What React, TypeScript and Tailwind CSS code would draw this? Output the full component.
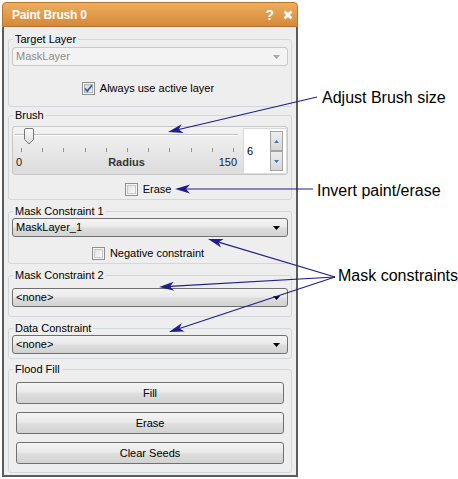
import type { ReactNode } from "react";

// Win7-ish control faces
const faceBg = "bg-[linear-gradient(#f4f4f4,#eaeaea_45%,#dddddd_55%,#d2d2d2)]";

const Group = ({ title, className, children }: { title: string; className: string; children: ReactNode }) => {
  return (
    <fieldset className={`rounded-[3px] border border-[#d0d8dd] px-[3px] ${className}`}>
      <legend className="ml-[1px] px-[2px] text-[11px] leading-[14px] text-black">{title}</legend>
      {children}
    </fieldset>
  );
};

const Combo = ({ text, disabled, className }: { text: string; disabled?: boolean; className?: string }) => {
  return (
    <div
      className={
        disabled
          ? `flex h-[19px] items-center justify-between rounded-[3px] border border-[#c8c8c8] bg-[#f3f3f3] pl-[3px] pr-[7px] text-[11px] text-[#8c8c8c] ${className ?? ""}`
          : `flex h-[19px] items-center justify-between rounded-[3px] border border-[#707070] ${faceBg} pl-[3px] pr-[7px] text-[11px] text-black ${className ?? ""}`
      }
    >
      <span>{text}</span>
      <svg width="7" height="4" viewBox="0 0 7 4">
        <polygon points="0,0 7,0 3.5,4" fill={disabled ? "#a6a6a6" : "#000000"} />
      </svg>
    </div>
  );
};

const CheckBox = ({ checked }: { checked?: boolean }) => {
  return (
    <svg width="13" height="13" viewBox="0 0 13 13">
      <defs>
        <linearGradient id={checked ? "cbOn" : "cbOff"} x1="0" y1="0" x2="1" y2="1">
          <stop offset="0" stopColor={checked ? "#d2d4d8" : "#e0e0e0"} />
          <stop offset="1" stopColor={checked ? "#f2f3f5" : "#fbfbfb"} />
        </linearGradient>
      </defs>
      <rect x="0.5" y="0.5" width="12" height="12" fill="#f4f4f4" stroke="#8e8f8f" />
      <rect x="2.5" y="2.5" width="8" height="8" fill={`url(#${checked ? "cbOn" : "cbOff"})`} stroke={checked ? "#b3b5ba" : "#c9c9c9"} />
      {checked && <path d="M3 6.5 L5.3 9 L10 3.2" fill="none" stroke="#3c5aa6" strokeWidth="1.8" />}
    </svg>
  );
};

const CheckRow = ({ label, checked, className }: { label: string; checked?: boolean; className: string }) => {
  return (
    <div className={`flex h-[14px] items-center justify-center gap-[5px] pr-[4px] text-[11px] text-black ${className}`}>
      <CheckBox checked={checked} />
      <span>{label}</span>
    </div>
  );
};

const Button = ({ label, className }: { label: string; className: string }) => {
  return (
    <div className={`mx-[4px] flex h-[22px] items-center justify-center rounded-[3px] border border-[#707070] ${faceBg} text-[11px] text-black ${className}`}>
      {label}
    </div>
  );
};

const SpinArrow = ({ up }: { up?: boolean }) => {
  return (
    <div className="flex h-[20px] w-[13px] items-center justify-center border border-[#a3a3a3] bg-[linear-gradient(#eeeeee,#d6d6d6)]">
      <svg width="5" height="3" viewBox="0 0 5 3">
        <polygon points={up ? "0,3 5,3 2.5,0" : "0,0 5,0 2.5,3"} fill="#4d6eb0" />
      </svg>
    </div>
  );
};

const Callout = ({ x1, y1, x2, y2 }: { x1: number; y1: number; x2: number; y2: number }) => {
  const len = Math.hypot(x2 - x1, y2 - y1);
  const ux = (x2 - x1) / len;
  const uy = (y2 - y1) / len;
  const nx = -uy;
  const ny = ux;
  const back = 15;
  const notch = 11;
  const half = 4.5;
  const pts = [
    [x2, y2],
    [x2 - back * ux + half * nx, y2 - back * uy + half * ny],
    [x2 - notch * ux, y2 - notch * uy],
    [x2 - back * ux - half * nx, y2 - back * uy - half * ny],
  ]
    .map((p) => p.join(","))
    .join(" ");
  return (
    <g>
      <line x1={x1} y1={y1} x2={x2 - notch * ux} y2={y2 - notch * uy} stroke="#1f1f8c" strokeWidth="1.2" />
      <polygon points={pts} fill="#1f1f8c" />
    </g>
  );
};

const ticks = Array.from({ length: 11 }, (_, i) => i);

export default function App() {
  return (
    <div className="relative h-[479px] w-[458px] overflow-hidden bg-white pl-[2px] pt-[2px] font-['Liberation_Sans',Arial,sans-serif]">
      {/* panel */}
      <div className="w-[296px]">
        <div className="flex h-[25px] items-center justify-between rounded-t-[4px] border border-[#b8742c] bg-[linear-gradient(#eeae5e,#d3893a)] pl-[9px] pr-[4px] text-white">
          <span className="text-[12px] font-bold tracking-[-0.2px]">Paint Brush 0</span>
          <div className="flex items-center gap-[9px]">
            <span className="text-[14px] font-bold leading-none">?</span>
            <svg width="10" height="10" viewBox="0 0 10 10">
              <path d="M1.5 1.5 L8.5 8.5 M8.5 1.5 L1.5 8.5" stroke="#ffffff" strokeWidth="2.6" />
            </svg>
          </div>
        </div>

        <div className="border-x-2 border-b-2 border-[#5c5c5c] bg-[#eeeeee] px-[4px] pb-[2px] pt-[5px]">
          <Group title="Target Layer" className="pb-[11px]">
            <Combo text="MaskLayer" disabled className="mt-[1px]" />
            <CheckRow label="Always use active layer" checked className="mt-[15px]" />
          </Group>

          <Group title="Brush" className="mt-[1px] pb-[3px]">
            <div className="mt-[4px] flex h-[49px] rounded-[3px] border border-[#c6c6c6] bg-[linear-gradient(#f3f3f3,#dcdcdc)]">
              <div className="relative flex-1">
                <div className="ml-[2px] mr-[5px] mt-[7px] h-[2px] border-b border-b-white bg-[#c2c2c2]" />
                <svg className="absolute left-[11px] top-[1px]" width="10" height="17" viewBox="0 0 10 17">
                  <defs>
                    <linearGradient id="thumb" x1="0" y1="0" x2="0" y2="1">
                      <stop offset="0" stopColor="#ffffff" />
                      <stop offset="1" stopColor="#d9d9d9" />
                    </linearGradient>
                  </defs>
                  <path d="M0.5 2 Q0.5 0.5 2 0.5 H8 Q9.5 0.5 9.5 2 V11.5 L5 16 L0.5 11.5 Z" fill="url(#thumb)" stroke="#777777" />
                </svg>
                <div className="ml-[8px] mr-[9px] mt-[12px] flex h-[4px] justify-between">
                  {ticks.map((t) => (
                    <div key={t} className="w-px bg-[#8f8f8f]" />
                  ))}
                </div>
                <div className="ml-[3px] mr-[6px] mt-[4px] grid grid-cols-[1fr_auto_1fr] text-[11px] leading-[13px] text-[#1a1a1a]">
                  <span>0</span>
                  <span className="font-bold text-[#333333]">Radius</span>
                  <span className="text-right">150</span>
                </div>
              </div>
              <div className="mt-px flex h-[46px] w-[44px] border border-[#dadada] bg-white">
                <div className="flex flex-1 items-center pl-[3px] text-[11px] text-black">6</div>
                <div className="mr-[3px] mt-[2px] flex flex-col">
                  <SpinArrow up />
                  <SpinArrow />
                </div>
              </div>
            </div>
            <CheckRow label="Erase" className="mt-[7px]" />
          </Group>

          <Group title="Mask Constraint 1" className="mt-[4px] pb-[3px]">
            <Combo text="MaskLayer_1" />
            <CheckRow label="Negative constraint" className="mt-[9px]" />
          </Group>

          <Group title="Mask Constraint 2" className="mt-[4px] pb-[9px]">
            <Combo text="<none>" className="mt-[6px]" />
          </Group>

          <Group title="Data Constraint" className="mt-[4px] pb-[4px]">
            <Combo text="<none>" />
          </Group>

          <Group title="Flood Fill" className="mt-[3px] pb-[8px]">
            <Button label="Fill" className="mt-[6px]" />
            <Button label="Erase" className="mt-[8px]" />
            <Button label="Clear Seeds" className="mt-[8px]" />
          </Group>
        </div>
      </div>

      {/* callouts over the panel */}
      <svg className="pointer-events-none absolute left-0 top-0" width="458" height="479">
        <Callout x1={317} y1={97} x2={168} y2={132} />
        <Callout x1={313} y1={189} x2={175} y2={189} />
        <Callout x1={335} y1={277} x2={208} y2={239} />
        <Callout x1={335} y1={277} x2={159} y2={287} />
        <Callout x1={335} y1={277} x2={169} y2={332} />
      </svg>
      <div className="absolute left-[322px] top-[89px] whitespace-nowrap text-[16px] leading-[18px] text-black">Adjust Brush size</div>
      <div className="absolute left-[317px] top-[182px] whitespace-nowrap text-[16px] leading-[18px] text-black">Invert paint/erase</div>
      <div className="absolute left-[338px] top-[267px] whitespace-nowrap text-[16px] leading-[18px] text-black">Mask constraints</div>
    </div>
  );
}
